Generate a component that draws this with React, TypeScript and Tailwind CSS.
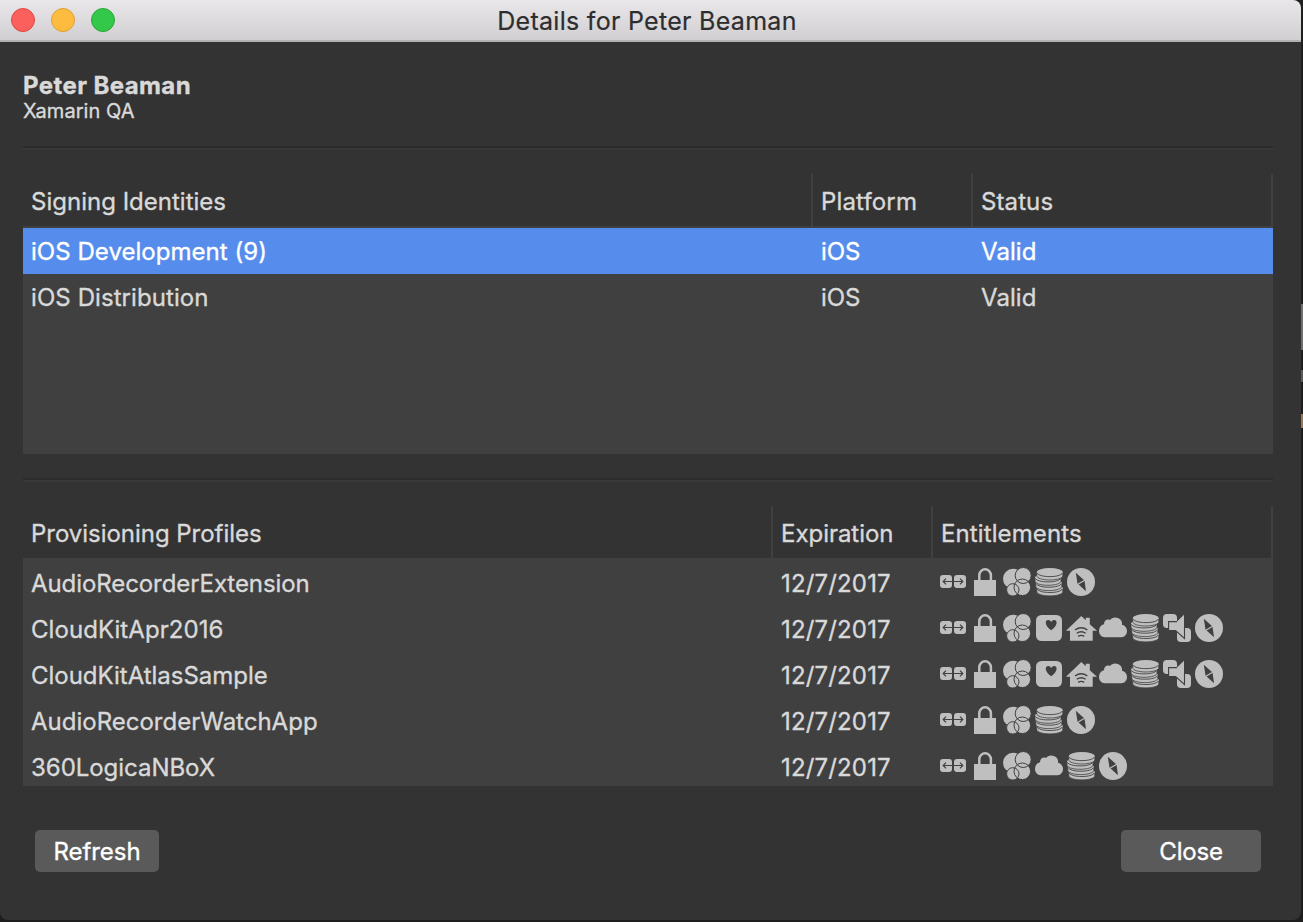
import React from "react";

type IconName = "groups" | "lock" | "circles" | "health" | "home" | "cloud" | "coins" | "audio" | "compass";

const FG = "#bfbfbf";
const BG = "#404040";

function Disc({ x, y }: { x: number; y: number }) {
  return (
    <>
      <path
        d={`M${x - 13} ${y}v3.500c0 2.400 5.800 4.200 13 4.200s13-1.800 13-4.200V${y}z`}
        fill={FG}
        stroke={BG}
        strokeWidth="0.8"
      />
      <ellipse cx={x} cy={y} rx="13" ry="4.200" fill={FG} />
      <path
        d={`M${x - 12.5} ${y + 0.8}c1 2.200 6 3.500 12.500 3.500s11.500-1.300 12.500-3.500`}
        fill="none"
        stroke={BG}
        strokeWidth="0.9"
      />
    </>
  );
}

const art: Record<IconName, React.ReactNode> = {
  groups: (
    <>
      <rect x="2" y="9" width="12" height="13" rx="3" fill={FG} />
      <rect x="16" y="9" width="12" height="13" rx="3" fill={FG} />
      <path d="M5 15.500h20M8 12.700l-2.800 2.800L8 18.300M22 12.700l2.800 2.800-2.800 2.800" fill="none" stroke={BG} strokeWidth="1.200" />
    </>
  ),
  lock: (
    <>
      <rect x="4" y="14" width="22" height="16" fill={FG} />
      <path d="M9.300 15V9.300a5.800 6 0 0 1 11.600 0V15" fill="none" stroke={FG} strokeWidth="2.500" />
    </>
  ),
  circles: (
    <>
      <g fill={FG}>
        <circle cx="11" cy="12.700" r="10" />
        <circle cx="21.200" cy="9.500" r="8" />
        <circle cx="20.300" cy="21.300" r="8.300" />
        <circle cx="10.800" cy="23.900" r="6.200" />
      </g>
      <g fill="none" stroke={BG} strokeWidth="1">
        <circle cx="21.200" cy="9.500" r="8" />
        <circle cx="20.300" cy="21.300" r="8.300" />
        <circle cx="10.800" cy="23.900" r="6.200" />
      </g>
    </>
  ),
  health: (
    <>
      <rect x="2" y="3" width="26" height="26" rx="5.500" fill={FG} />
      <path d="M17.200 18.300C10.500 13.800 10.700 8 14.200 8q2.200 0 3 2 .8-2 3-2c3.500 0 3.700 5.800-3 10.300z" fill={BG} />
    </>
  ),
  home: (
    <>
      <path d="M15.300 4l4.500 4.300V5.700h4v6.600l7.200 6.500h-4.300v10H4v-10H0z" fill={FG} />
      <path d="M9 18q6.200-4.600 12.400 0M10.700 21.300q4.500-3.200 9 0M12.200 24.400q3-2 6 0" fill="none" stroke={BG} strokeWidth="1.400" />
    </>
  ),
  cloud: (
    <path
      d="M7 25.200c-4 0-6-3-6-6.200 0-3.500 2-6 5-6.700C6 8.500 9 6.500 12 8c1.500-2.300 5-3.100 8-1.900 3.200 1.200 4.500 4 4 6.700 3 .6 5 3 5 6.200 0 3.400-2.500 6.200-5.500 6.200z"
      fill={FG}
    />
  ),
  coins: (
    <>
      <Disc x={15.8} y={22.2} />
      <Disc x={14.8} y={16.9} />
      <Disc x={14} y={11.6} />
      <Disc x={15.8} y={6.3} />
    </>
  ),
  audio: (
    <>
      <rect x="1" y="2" width="14" height="14" rx="4" fill={FG} />
      <rect x="15" y="16" width="14" height="14" rx="4" fill={FG} />
      <path d="M7 10h7.500L22 2.700v23.500L13.800 18.500H7z" fill={FG} />
      <path d="M15 9.600H6.600v8.900h7l8.900 8V15" fill="none" stroke={BG} strokeWidth="1.100" />
    </>
  ),
  compass: (
    <>
      <circle cx="15" cy="16" r="14" fill={FG} />
      <path d="M9.800 6.800l8.700 7.700L20 25.200l-8.500-7.700z" fill={BG} />
      <path d="M11 18.700l8.500-5" stroke={FG} strokeWidth="1.200" />
    </>
  ),
};

function Icon({ name }: { name: IconName }) {
  return (
    <svg width="32" height="32" viewBox="0 0 32 32" className="shrink-0">
      {art[name]}
    </svg>
  );
}

const short: IconName[] = ["groups", "lock", "circles", "coins", "compass"];
const full: IconName[] = ["groups", "lock", "circles", "health", "home", "cloud", "coins", "audio", "compass"];

const profiles: { name: string; track: string; icons: IconName[] }[] = [
  { name: "AudioRecorderExtension", track: "tracking-[-0.08px]", icons: short },
  { name: "CloudKitApr2016", track: "tracking-[0.06px]", icons: full },
  { name: "CloudKitAtlasSample", track: "tracking-[-0.02px]", icons: full },
  { name: "AudioRecorderWatchApp", track: "tracking-[0px]", icons: short },
  { name: "360LogicaNBoX", track: "tracking-[-0.04px]", icons: ["groups", "lock", "circles", "cloud", "coins", "compass"] },
];

function Divider() {
  return <div className="h-1 border-t-2 border-b-2 border-t-[#2b2b2b] border-b-[#393939]" />;
}

export default function App() {
  return (
    <div className="flex h-[922px] w-[1303px] items-start overflow-hidden bg-[#1e1e1e] font-['Inter',sans-serif] text-[24px] leading-[48px] text-[#d9d9d9]">
      <div className="flex h-[920px] w-[1301px] shrink-0 flex-col overflow-hidden rounded-tr-lg rounded-b-lg bg-[#333333]">
        <header className="grid h-[42px] shrink-0 grid-cols-[1fr_auto_1fr] items-center border-b-2 border-[#b3b1b3] bg-linear-to-b from-[#e9e7e9] to-[#d1cfd1] pr-[18px] pl-[11px]">
          <div className="flex gap-4">
            <span className="size-6 rounded-full border border-[#df4744] bg-[#fc605c]" />
            <span className="size-6 rounded-full border border-[#dea034] bg-[#fdbc40]" />
            <span className="size-6 rounded-full border border-[#27aa35] bg-[#34c84a]" />
          </div>
          <h1 className="pt-0.5 text-[25px] leading-[38px] tracking-[0.29px] text-[#2d2d2f] [-webkit-text-stroke:0.2px]">Details for Peter Beaman</h1>
        </header>

        <main className="flex flex-col pr-7 pl-[23px] [-webkit-text-stroke:0.35px]">
          <div className="h-[104px] pt-[30px]">
            <div className="text-[24px] leading-[27px] font-bold tracking-[0.41px]">Peter Beaman</div>
            <div className="text-[20px] leading-6 tracking-[0.05px]">Xamarin QA</div>
          </div>
          <Divider />

          <section className="mt-6 h-[280px] bg-[#404040]">
            <div className="grid h-[54px] grid-cols-[790px_160px_300px] grid-rows-[52px] border-b-2 border-[#404040] bg-[#333333] leading-[55px]">
              <div className="border-r-2 border-[#404040] pl-2 tracking-[0.01px]">Signing Identities</div>
              <div className="border-r-2 border-[#404040] pl-2 tracking-[0.15px]">Platform</div>
              <div className="border-r-2 border-[#404040] pl-2 tracking-[0.1px]">Status</div>
            </div>
            <div className="grid h-[46px] grid-cols-[790px_160px_300px] grid-rows-[46px] bg-[#568ceb] text-white">
              <div className="pl-2 tracking-[0.04px]">iOS Development (9)</div>
              <div className="pl-2 tracking-[-0.1px]">iOS</div>
              <div className="pl-2 tracking-[0.05px]">Valid</div>
            </div>
            <div className="grid h-[46px] grid-cols-[790px_160px_300px] grid-rows-[46px]">
              <div className="pl-2 tracking-[0.08px]">iOS Distribution</div>
              <div className="pl-2 tracking-[-0.1px]">iOS</div>
              <div className="pl-2 tracking-[0.05px]">Valid</div>
            </div>
          </section>

          <div className="mt-6"><Divider /></div>

          <section className="mt-6 h-[280px] overflow-hidden bg-[#404040]">
            <div className="grid h-[54px] grid-cols-[750px_160px_340px] grid-rows-[52px] border-b-2 border-[#404040] bg-[#333333] leading-[55px]">
              <div className="border-r-2 border-[#404040] pl-2 tracking-[-0.03px]">Provisioning Profiles</div>
              <div className="border-r-2 border-[#404040] pl-2 tracking-[-0.03px]">Expiration</div>
              <div className="border-r-2 border-[#404040] pl-2 tracking-[0.11px]">Entitlements</div>
            </div>
            {profiles.map((p) => (
              <div key={p.name} className="grid h-[46px] grid-cols-[750px_160px_340px] grid-rows-[46px]">
                <div className={`pl-2 ${p.track}`}>{p.name}</div>
                <div className="pl-2 tracking-[0.16px]">12/7/2017</div>
                <div className="flex items-start pt-1.5 pl-[5px]">
                  {p.icons.map((n) => <Icon key={n} name={n} />)}
                </div>
              </div>
            ))}
          </section>

          <div className="mt-11 flex justify-between px-3 text-white">
            <button className="h-[42px] w-[124px] rounded-[5px] bg-[#5a5a5a] pt-0.5 leading-[40px] tracking-[-0.05px]">Refresh</button>
            <button className="h-[42px] w-[140px] rounded-[5px] bg-[#5a5a5a] pt-0.5 leading-[40px] tracking-[-0.2px]">Close</button>
          </div>
        </main>
      </div>
      <div className="flex w-0.5 flex-col pt-[304px]">
        <div className="h-[46px] bg-[#6e6e6e]" />
        <div className="mt-5 h-3 bg-[#5c5a58]" />
        <div className="mt-8 h-3.5 bg-[#94795a]" />
      </div>
    </div>
  );
}
